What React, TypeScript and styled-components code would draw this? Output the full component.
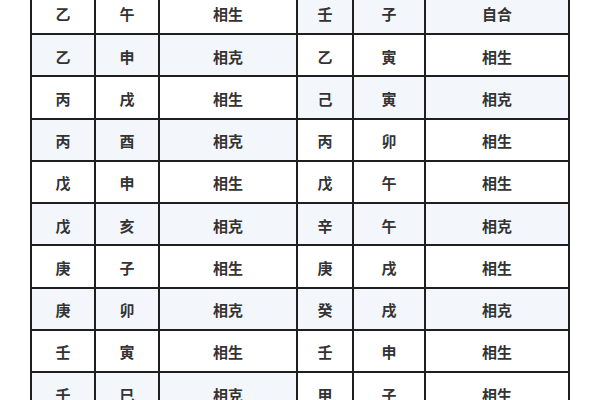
import styled, { createGlobalStyle } from 'styled-components'

const GlobalStyle = createGlobalStyle`
  html, body {
    margin: 0;
    padding: 0;
    background: #ffffff;
    overflow: hidden;
  }
  body {
    font-family: "Noto Sans CJK SC", "Noto Sans", sans-serif;
  }
`

const Page = styled.div`
  width: 600px;
  height: 400px;
  overflow: hidden;
  background: #ffffff;
`

const Grid = styled.div`
  box-sizing: border-box;
  display: grid;
  grid-template-columns: 62px 62px 136px 54px 70px 142px;
  grid-auto-rows: 40.25px;
  gap: 2px;
  padding: 2px;
  width: 540px;
  margin: -9.25px 0 0 30px;
  background: #1f1f1f;
`

const Cell = styled.div<{ $shaded: boolean }>`
  display: flex;
  align-items: center;
  justify-content: center;
  padding-top: 2px;
  background: ${(p) => (p.$shaded ? '#f3f6fb' : '#ffffff')};
  color: #333333;
  font-size: 15px;
  font-weight: 700;
  line-height: 1;
`

type Pair = [string, string, string]

const rows: [Pair, Pair][] = [
  [['乙', '午', '相生'], ['壬', '子', '自合']],
  [['乙', '申', '相克'], ['乙', '寅', '相生']],
  [['丙', '戌', '相生'], ['己', '寅', '相克']],
  [['丙', '酉', '相克'], ['丙', '卯', '相生']],
  [['戊', '申', '相生'], ['戊', '午', '相生']],
  [['戊', '亥', '相克'], ['辛', '午', '相克']],
  [['庚', '子', '相生'], ['庚', '戌', '相生']],
  [['庚', '卯', '相克'], ['癸', '戌', '相克']],
  [['壬', '寅', '相生'], ['壬', '申', '相生']],
  [['壬', '巳', '相克'], ['甲', '子', '相生']],
]

export default function App() {
  return (
    <Page>
      <GlobalStyle />
      <Grid>
        {rows.map((row, i) =>
          row.map((half, h) =>
            half.map((text, c) => (
              <Cell key={`${i}-${h}-${c}`} $shaded={half[2] !== '相生'}>
                {text}
              </Cell>
            ))
          )
        )}
      </Grid>
    </Page>
  )
}
